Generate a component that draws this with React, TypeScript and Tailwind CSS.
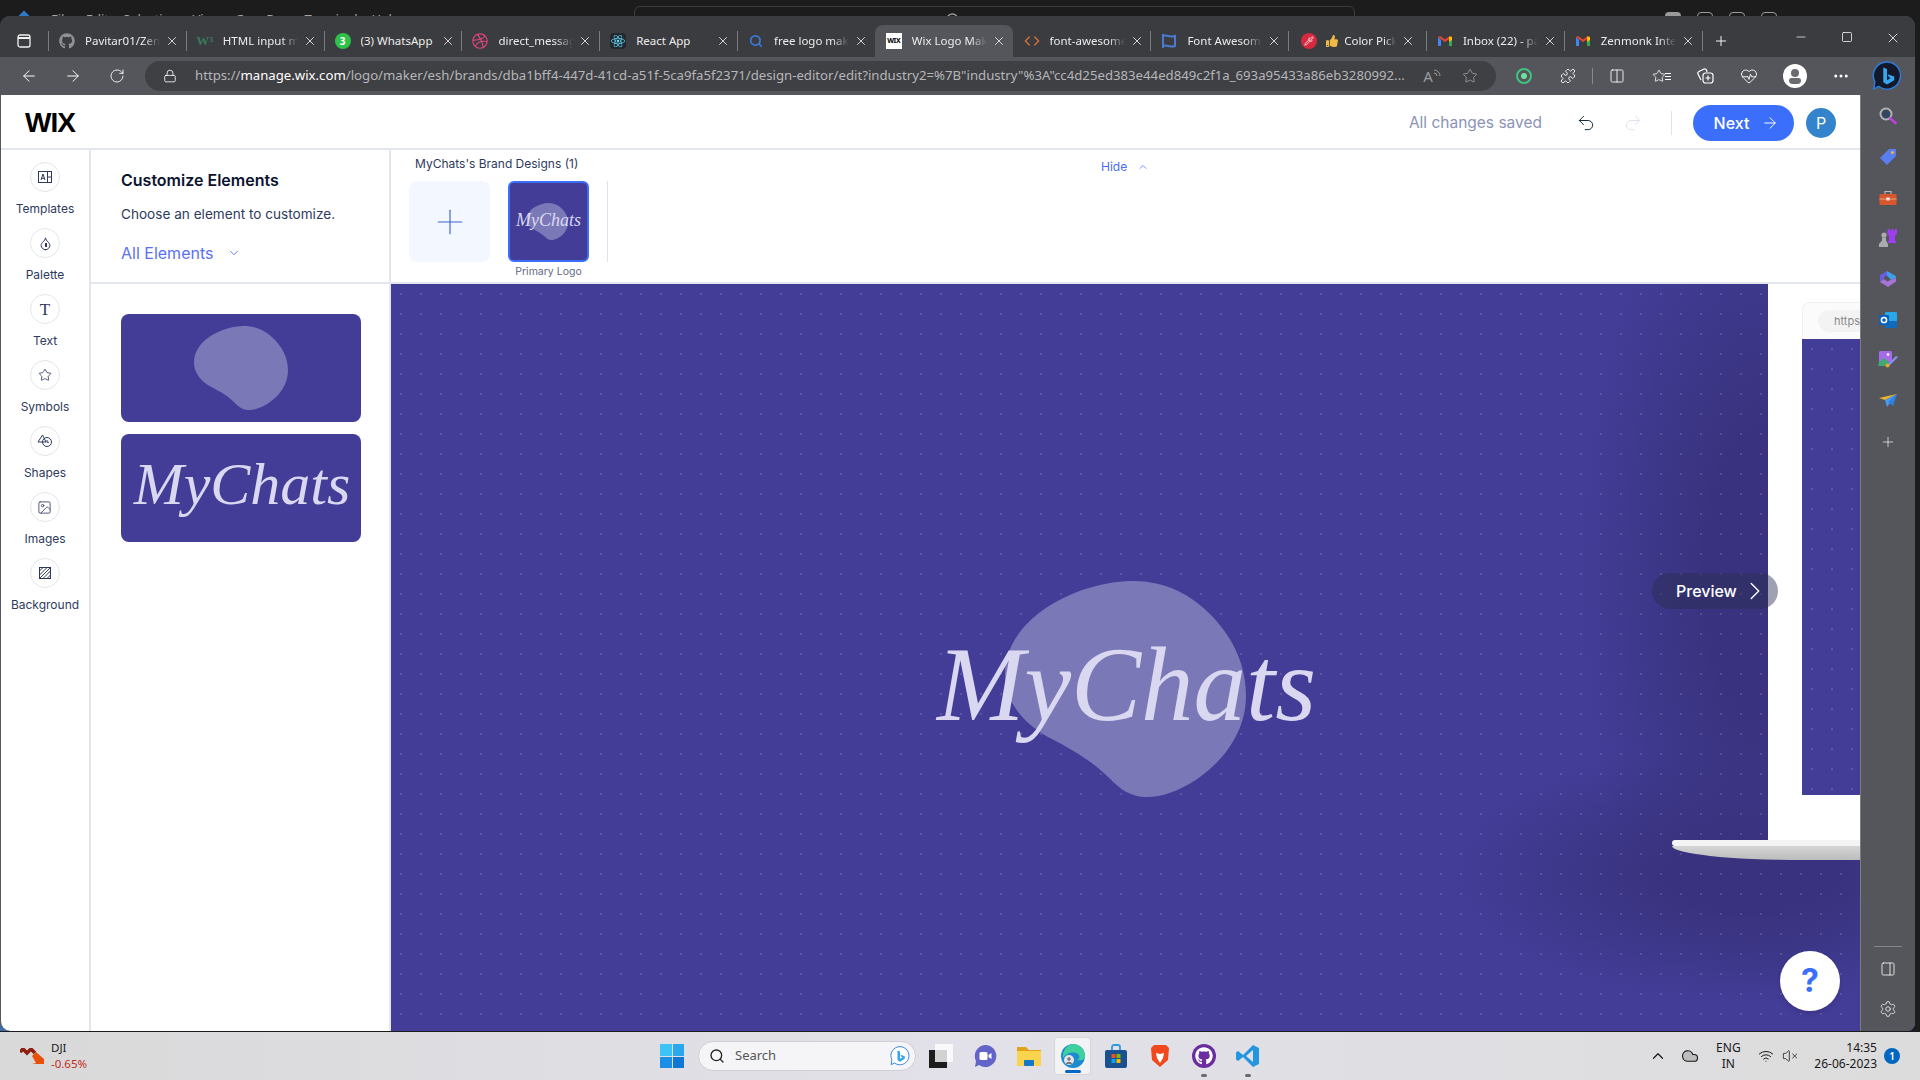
import React from "react";
import { FaDribbble, FaGithub, FaReact, FaThumbsUp } from "react-icons/fa";
import {
  ArrowLeft,
  ArrowRight,
  ChevronDown,
  ChevronRight,
  ChevronUp,
  Cloud,
  Code,
  Columns2,
  Droplet,
  Ellipsis,
  HeartPulse,
  Image,
  Lock,
  Minus,
  PanelRight,
  Pipette,
  Plus,
  Puzzle,
  Redo2,
  RotateCw,
  Search,
  Settings,
  Square,
  Star,
  Undo2,
  VolumeX,
  Wifi,
  X,
} from "lucide-react";

const serif = "font-['Liberation_Serif',serif] italic";

const Blob = ({ className }: { className: string }) => (
  <svg viewBox="0 0 723 650" className={className} preserveAspectRatio="none">
    <path
      d="M385 0C480 0 560 40 625 110C690 180 723 260 723 345C723 450 660 540 570 600C520 632 470 650 425 650C375 650 345 625 315 595C270 550 210 510 130 470C50 425 0 360 0 280C0 200 50 130 125 80C200 30 300 0 385 0Z"
      fill="#7b78b8"
    />
  </svg>
);

const Gmail = () => (
  <svg viewBox="0 0 16 16" className="w-4 h-4">
    <path d="M1 4v9h3V7z" fill="#4285f4" />
    <path d="M15 4v9h-3V7z" fill="#34a853" />
    <path d="M1 4l7 5 7-5-2-1-5 3.5L3 3z" fill="#ea4335" />
    <path d="M12 3.5L15 4v3l-3 2z" fill="#fbbc04" />
  </svg>
);

const tabs: { title: string; icon: React.ReactNode; fade?: boolean; active?: boolean; noDivider?: boolean }[] = [
  { title: "Pavitar01/Zenmonk", fade: true, icon: <FaGithub className="w-4 h-4 text-[#8f9094]" /> },
  { title: "HTML input maxlength", fade: true, icon: <span className="text-[13px] leading-4 font-bold text-[#3a7a5c] font-['Liberation_Serif',serif]">W³</span> },
  {
    title: "(3) WhatsApp",
    icon: (
      <span className="w-4 h-4 rounded-full bg-[#2fc24b] flex items-center justify-center text-[10px] font-bold text-white">
        3
      </span>
    ),
  },
  { title: "direct_message_inbox", fade: true, icon: <FaDribbble className="w-4 h-4 text-[#e0457f]" /> },
  {
    title: "React App",
    icon: (
      <span className="w-4 h-4 bg-[#23272f] rounded-sm flex items-center justify-center">
        <FaReact className="w-3.5 h-3.5 text-[#61dafb]" />
      </span>
    ),
  },
  { title: "free logo maker", fade: true, icon: <Search className="w-3.5 h-3.5 text-[#3b78d8]" strokeWidth={3} /> },
  {
    title: "Wix Logo Maker",
    fade: true,
    active: true,
    icon: (
      <span className="w-4 h-4 bg-white flex items-center justify-center text-[7px] font-bold text-black tracking-tighter">
        WIX
      </span>
    ),
  },
  { title: "font-awesome-icons", fade: true, noDivider: true, icon: <Code className="w-4 h-4 text-[#d8703f]" /> },
  {
    title: "Font Awesome Icons",
    fade: true,
    icon: (
      <svg viewBox="0 0 16 16" className="w-4 h-4" fill="none" stroke="#4a7bd0" strokeWidth="2">
        <path d="M2 1v14M2 3c4-2 7 2 12 0v10c-5 2-8-2-12 0" />
      </svg>
    ),
  },
  {
    title: "Color Picker",
    fade: true,
    icon: (
      <span className="flex items-center gap-[9px]">
        <span className="w-4 h-4 rounded-full bg-[#d6283e] flex items-center justify-center">
          <Pipette className="w-2.5 h-2.5 text-white" />
        </span>
        <FaThumbsUp className="w-3 h-3 text-[#f2b846]" />
      </span>
    ),
  },
  { title: "Inbox (22) - pavitar", fade: true, icon: <Gmail /> },
  { title: "Zenmonk Internship", fade: true, icon: <Gmail /> },
];

const Tab = ({ tab }: { tab: (typeof tabs)[number] }) => {
  const isPick = tab.title === "Color Picker";
  return (
    <div
      className={`w-[137.8px] h-8 flex items-center shrink-0 ${tab.active ? "bg-[#55565b] rounded-t-lg" : ""}`}
    >
      <span
        className={`w-px h-5 shrink-0 ${tab.active || tab.noDivider ? "bg-transparent" : "bg-[#7a7b7f]"}`}
      />
      <span className={`${isPick ? "w-[41px]" : "w-4"} h-4 ml-[10px] shrink-0 flex items-center justify-center`}>
        {tab.icon}
      </span>
      <span
        className={`${isPick ? "w-[52px] ml-[4px]" : "w-[75px] ml-[10px]"} shrink-0 overflow-hidden whitespace-nowrap text-[11.5px] text-[#ececec] ${
          tab.fade ? "[mask-image:linear-gradient(to_right,black_78%,transparent)]" : ""
        }`}
      >
        {tab.title.replace("Color Picker", "Color Pick")}
      </span>
      <X className="w-[14px] h-[14px] ml-[5px] text-[#e8e8e8] shrink-0" strokeWidth={1.5} />
    </div>
  );
};

const ToolSlot = ({ children, className = "" }: { children: React.ReactNode; className?: string }) => (
  <div className={`w-11 h-full flex items-center justify-center shrink-0 ${className}`}>{children}</div>
);

const BingBadge = ({ className }: { className: string }) => (
  <svg viewBox="0 0 32 32" className={className}>
    <path d="M16 1a14.5 14.5 0 1 1-9 26l-5 3 1-8A14.5 14.5 0 0 1 16 1z" fill="#13192a" stroke="#2b7de0" strokeWidth="1.5" />
    <path d="M12 7l4 1.5v12l4-2.3-2-1-1.3-3.2 7 2.4v4L16 25l-4-2.4z" fill="#37a6f0" />
  </svg>
);

const railItems: { label: string; icon: React.ReactNode }[] = [
  {
    label: "Templates",
    icon: (
      <svg viewBox="0 0 14 12" className="w-[14px] h-[12px]" fill="none" stroke="#2e3a5c" strokeWidth="1">
        <rect x="0.5" y="0.5" width="13" height="11" />
        <path d="M9.5 0.5v11M9.5 6h4M3 9l2-6 2 6M3.6 7.3h2.8" />
      </svg>
    ),
  },
  {
    label: "Palette",
    icon: (
      <span className="relative flex items-center justify-center">
        <Droplet className="w-[15px] h-[15px] text-[#2e3a5c]" strokeWidth={1.6} />
        <span className="absolute top-[7px] left-[7.500px] w-[2px] h-[4px] bg-[#2e3a5c]" />
      </span>
    ),
  },
  {
    label: "Text",
    icon: <span className="font-['Liberation_Serif',serif] text-[17px] leading-none text-[#2e3a5c]">T</span>,
  },
  { label: "Symbols", icon: <Star className="w-[14px] h-[14px] text-[#2e3a5c]" strokeWidth={1.4} /> },
  {
    label: "Shapes",
    icon: (
      <svg viewBox="0 0 16 14" className="w-4 h-[14px]" fill="none" stroke="#2e3a5c" strokeWidth="1">
        <path d="M5.5 1L1 8h8z" />
        <circle cx="10" cy="8" r="4.5" />
        <path d="M10 6v2.3h2" />
      </svg>
    ),
  },
  { label: "Images", icon: <Image className="w-[15px] h-[15px] text-[#2e3a5c]" strokeWidth={1.3} /> },
  {
    label: "Background",
    icon: (
      <svg viewBox="0 0 12 12" className="w-3 h-3" fill="none" stroke="#2e3a5c" strokeWidth="1">
        <rect x="0.5" y="0.5" width="11" height="11" />
        <path d="M0.5 4L4 .5M0.5 8L8 .5M0.5 11.5L11.5 .5M4 11.5L11.5 4M8 11.5L11.5 8" />
      </svg>
    ),
  },
];

const sideIcons: React.ReactNode[] = [
  <svg key="mag" viewBox="0 0 18 18" className="w-[18px] h-[18px]" fill="none">
    <circle cx="7" cy="7" r="5.5" fill="#35465f" stroke="#b0b3b8" strokeWidth="2" />
    <path d="M11.5 11.5L16.5 16" stroke="#c33fe0" strokeWidth="2.6" strokeLinecap="round" />
  </svg>,
  <svg key="tag" viewBox="0 0 18 18" className="w-[18px] h-[18px]">
    <path d="M10 1h7v7l-9 9-7-7z" fill="#5a7df0" />
    <circle cx="13.5" cy="4.5" r="1.6" fill="#e9b93a" />
  </svg>,
  <svg key="box" viewBox="0 0 18 18" className="w-[18px] h-[18px]">
    <path d="M6 5V2.5h6V5" fill="none" stroke="#bbb" strokeWidth="1.2" />
    <rect x="0.5" y="5" width="17" height="11" rx="1" fill="#d6572d" />
    <rect x="0.5" y="9.5" width="17" height="1" fill="#f6a27f" />
    <rect x="7.5" y="8.5" width="3" height="3" fill="#eee" />
  </svg>,
  <svg key="chess" viewBox="0 0 20 18" className="w-5 h-[18px]">
    <path d="M11 0h2v1.5h1.500V0h2v1.500H18V0h2v5l-2 1.500V12h1v2h-8v-2h1V6.500L10 5z" transform="translate(-1 0)" fill="#9d3ff0" />
    <circle cx="6" cy="6" r="2.600" fill="#a9abae" />
    <path d="M4 8.500h4v3l2 3.500v3H1v-3l3-3.500z" fill="#a9abae" />
  </svg>,
  <svg key="copilot" viewBox="0 0 18 18" className="w-[18px] h-[18px]">
    <path d="M8 1L2 4.500C1 5 1 6 1 7v5l4-3V7l3-1.500z" fill="#6a5de0" />
    <path d="M8 1l8 4.500c1 .5 1 1.500 1 2.500l-5 2-4-4.500z" fill="#3d9fe8" />
    <path d="M1 12l4-3 3 2.500 9-3.500v3.500L9 17z" fill="#a873d8" />
  </svg>,
  <svg key="outlook" viewBox="0 0 18 18" className="w-[18px] h-[18px]">
    <rect x="6" y="1" width="12" height="16" rx="1" fill="#28a8ea" />
    <rect x="6" y="10" width="12" height="7" fill="#0f6cbd" />
    <rect x="0" y="4" width="10" height="10" rx="1" fill="#0a5fc0" />
    <circle cx="5" cy="9" r="2.600" fill="none" stroke="#fff" strokeWidth="1.500" />
  </svg>,
  <svg key="img" viewBox="0 0 20 18" className="w-5 h-[18px]">
    <rect x="1" y="0" width="13" height="12" rx="1.500" fill="#a66be8" />
    <circle cx="10" cy="3.500" r="1.300" fill="#fff" />
    <path d="M1 11l5-4 6 5-3 3H0z" fill="#3fa873" />
    <path d="M9 14l9-9 2 1-9 9z" fill="#8b8ff0" />
    <circle cx="9.500" cy="14.500" r="2" fill="#e3a72c" />
  </svg>,
  <svg key="send" viewBox="0 0 18 14" className="w-[18px] h-[14px]">
    <path d="M0 4L18 0 6 6z" fill="#f0b429" />
    <path d="M18 0L6 6l2 7z" fill="#4a9cf0" />
    <path d="M18 0L9 8l5 4z" fill="#2f7fe0" />
  </svg>,
];

const TaskIcon = ({ children, dot }: { children: React.ReactNode; dot?: boolean }) => (
  <div className="w-11 h-full relative flex items-center justify-center shrink-0">
    {children}
    {dot && <span className="absolute bottom-[3px] w-[6px] h-[3px] rounded-full bg-[#6b6b6b]" />}
  </div>
);

export default function App() {
  return (
    <div className="w-[1920px] h-[1080px] overflow-hidden flex flex-col bg-[#1c1c1c] font-['Inter',sans-serif]">
      {/* whatever window sits behind the browser */}
      <div className="h-4 flex shrink-0 overflow-hidden text-[13px] text-[#a5a5a5] font-['Noto_Sans',sans-serif]">
        <span className="w-[51px] pl-[18px] pt-[13px] shrink-0">
          <span className="block w-3 h-3 bg-[#2f78c4] rotate-45" />
        </span>
        <div className="w-[583px] flex gap-[14px] pt-[9px] leading-5 shrink-0">
          <span>File</span>
          <span>Edit</span>
          <span>Selection</span>
          <span>View</span>
          <span>Go</span>
          <span>Run</span>
          <span>Terminal</span>
          <span>Help</span>
        </div>
        <div className="w-[721px] h-6 mt-[6px] rounded-t-md border border-[#3d3d3d] pl-[310px] pt-[5px] shrink-0">
          <Search className="w-4 h-4 text-[#9a9a9a]" />
        </div>
        <div className="flex gap-4 pl-[310px] pt-[12px]">
          <span className="w-4 h-4 rounded-sm bg-[#9a9a9a]" />
          <span className="w-4 h-4 rounded-sm border border-[#9a9a9a]" />
          <span className="w-4 h-4 rounded-sm border border-[#9a9a9a]" />
          <span className="w-4 h-4 rounded-sm border border-[#9a9a9a]" />
        </div>
      </div>

      {/* browser window */}
      <div className="w-[1915px] h-[1015px] shrink-0 flex flex-col rounded-t-[10px] rounded-br-[8px] overflow-hidden bg-[#55565b] font-['Noto_Sans',sans-serif]">
        <div className="h-[41px] shrink-0 bg-[#3b3c40] flex items-end">
          <div className="w-12 h-8 flex items-center justify-center shrink-0">
            <svg viewBox="0 0 14 14" className="w-[14px] h-[14px]" fill="none" stroke="#f0f0f0" strokeWidth="1.300">
              <rect x="1" y="1" width="12" height="12" rx="2" />
              <path d="M1 4h12" strokeWidth="2" />
            </svg>
          </div>
          {tabs.map((tab) => (
            <Tab key={tab.title} tab={tab} />
          ))}
          <span className="w-px h-5 bg-[#7a7b7f] mb-[6px] shrink-0" />
          <div className="h-8 w-9 flex items-center justify-center shrink-0">
            <Plus className="w-4 h-4 text-[#f0f0f0]" strokeWidth={1.5} />
          </div>
          <div className="flex self-start pt-[14px] ml-[39px]">
            <div className="w-[46px] flex justify-center">
              <Minus className="w-[14px] h-[14px] text-white" strokeWidth={1.2} />
            </div>
            <div className="w-[46px] flex justify-center">
              <Square className="w-[12px] h-[12px] mt-px text-white" strokeWidth={1.5} />
            </div>
            <div className="w-[46px] flex justify-center">
              <X className="w-[16px] h-[16px] text-white" strokeWidth={1.2} />
            </div>
          </div>
        </div>

        <div className="h-[38px] shrink-0 flex items-center pl-[7px]">
          <ToolSlot>
            <ArrowLeft className="w-[18px] h-[18px] text-white" strokeWidth={1.3} />
          </ToolSlot>
          <ToolSlot>
            <ArrowRight className="w-[18px] h-[18px] text-white" strokeWidth={1.3} />
          </ToolSlot>
          <ToolSlot>
            <RotateCw className="w-4 h-4 text-white" strokeWidth={1.3} />
          </ToolSlot>
          <div className="w-[1351px] h-[30px] ml-[6px] rounded-full bg-[#3f4044] flex items-center shrink-0">
            <div className="w-[50px] flex justify-center shrink-0">
              <Lock className="w-[14px] h-[14px] text-white" strokeWidth={1.4} />
            </div>
            <div className="w-[1214px] shrink-0 overflow-hidden whitespace-nowrap text-[13.2px] text-[#b5b6b9]">
              https://<span className="text-white">manage.wix.com</span>
              /logo/maker/esh/brands/dba1bff4-447d-41cd-a51f-5ca9fa5f2371/design-editor/edit?industry2=%7B"industry"%3A"cc4d25ed383e44ed849c2f1a_693a95433a86eb3280992...
            </div>
            <span className="w-[46px] flex justify-center items-start text-[15px] leading-none text-[#9a9b9e] shrink-0">
              A
              <svg viewBox="0 0 8 8" className="w-2 h-2" fill="none" stroke="#9a9b9e" strokeWidth="1">
                <path d="M1 4a3 3 0 0 1 3 3M1 1a6 6 0 0 1 6 6" />
              </svg>
            </span>
            <Star className="w-4 h-4 ml-[7px] text-[#9a9b9e]" strokeWidth={1.3} />
          </div>
          <ToolSlot className="ml-[6px]">
            <span className="w-4 h-4 rounded-full border-2 border-[#3fc380] flex items-center justify-center">
              <span className="w-[6px] h-[6px] rounded-full bg-[#6fe0a0]" />
            </span>
          </ToolSlot>
          <ToolSlot>
            <Puzzle className="w-4 h-4 text-white" strokeWidth={1.3} />
          </ToolSlot>
          <span className="w-px h-4 mx-[2px] bg-[#88898c] shrink-0" />
          <ToolSlot>
            <Columns2 className="w-4 h-4 text-white" strokeWidth={1.3} />
          </ToolSlot>
          <ToolSlot>
            <span className="flex items-center">
              <Star className="w-[14px] h-[14px] text-white" strokeWidth={1.4} />
              <span className="flex flex-col gap-[2px] -ml-px">
                <span className="w-[6px] h-px bg-white" />
                <span className="w-[6px] h-px bg-white" />
                <span className="w-[6px] h-px bg-white" />
              </span>
            </span>
          </ToolSlot>
          <ToolSlot>
            <svg viewBox="0 0 18 18" className="w-[18px] h-[18px]" fill="none" stroke="#fff" strokeWidth="1.200">
              <path d="M5 13L2 7c-.5-1 0-2 1-2.500L8 2c1-.5 2 0 2.500 1L11 5" />
              <rect x="7" y="6" width="10" height="10" rx="2.500" />
              <path d="M12 8.500v5M9.500 11h5" />
            </svg>
          </ToolSlot>
          <ToolSlot>
            <HeartPulse className="w-[18px] h-[18px] text-white" strokeWidth={1.2} />
          </ToolSlot>
          <ToolSlot className="ml-[2px]">
            <span className="w-6 h-6 rounded-full bg-white flex flex-col items-center justify-center">
              <span className="w-2 h-2 rounded-full bg-[#6b6c70]" />
              <span className="w-3 h-[6px] mt-px rounded-t-[3px] rounded-b-sm bg-[#6b6c70]" />
            </span>
          </ToolSlot>
          <ToolSlot className="ml-[2px]">
            <Ellipsis className="w-[18px] h-[18px] text-white" strokeWidth={2} />
          </ToolSlot>
          <ToolSlot className="ml-[2px]">
            <BingBadge className="w-[30px] h-[30px]" />
          </ToolSlot>
        </div>

        <div className="flex-1 flex min-h-0 bg-[#3d6ca8]">
          {/* page */}
          <div className="w-[1860px] shrink-0 flex flex-col bg-white border-l border-[#55565b] rounded-bl-[10px] overflow-hidden font-['Inter',sans-serif]">
            <header className="h-[55px] shrink-0 border-b-2 border-[#e3e6ec] flex items-center pl-6 pt-[2px]">
              <span className="text-[28px] font-bold leading-none tracking-[-1px] text-black font-['Liberation_Sans',sans-serif]">
                WIX
              </span>
              <span className="ml-auto text-[15.5px] text-[#8b93b5]">All changes saved</span>
              <Undo2 className="w-5 h-5 ml-[34px] text-[#162d3d]" strokeWidth={1.2} />
              <Redo2 className="w-5 h-5 ml-[27px] text-[#dfe3ee]" strokeWidth={1.2} />
              <span className="w-px h-6 ml-[28px] bg-[#dfe3ee]" />
              <button className="w-[101px] h-9 ml-[21px] pl-[6px] rounded-full bg-[#3b6ffb] text-white text-base font-medium flex items-center justify-center gap-[12px]">
                Next
                <ArrowRight className="w-[18px] h-[18px]" strokeWidth={1.3} />
              </button>
              <span className="w-[30px] h-[30px] ml-3 mr-6 rounded-full bg-[#3384cc] text-white text-base flex items-center justify-center">
                P
              </span>
            </header>

            <div className="flex-1 flex min-h-0">
              <nav className="w-[90px] shrink-0 border-r-2 border-[#e3e6ec] flex flex-col items-center pt-[12px]">
                {railItems.map((item) => (
                  <div key={item.label} className="h-[66px] flex flex-col items-center shrink-0">
                    <span className="w-[30px] h-[30px] rounded-full border border-[#e3e6ec] flex items-center justify-center">
                      {item.icon}
                    </span>
                    <span className="mt-[9px] text-xs leading-4 text-[#2e3a5c]">{item.label}</span>
                  </div>
                ))}
              </nav>

              <aside className="w-[300px] shrink-0 border-r-2 border-[#e3e6ec] flex flex-col">
                <div className="h-[134px] shrink-0 border-b-2 border-[#e3e6ec] pl-[30px] pt-5">
                  <h2 className="text-base leading-5 font-semibold text-[#0c1330]">Customize Elements</h2>
                  <p className="mt-[14px] text-[13.6px] leading-5 text-[#2e3a5c]">Choose an element to customize.</p>
                  <div className="mt-[19px] flex items-center text-base leading-5 text-[#5a71f5]">
                    All Elements
                    <ChevronDown className="w-[14px] h-[14px] ml-[14px]" strokeWidth={1.5} />
                  </div>
                </div>
                <div className="pl-[30px] pt-[30px] flex flex-col gap-3">
                  <div className="w-60 h-[108px] rounded-lg bg-[#433d98] flex items-center justify-center">
                    <Blob className="w-[94px] h-[84px]" />
                  </div>
                  <div className="w-60 h-[108px] rounded-lg bg-[#433d98] flex items-center justify-center pl-[2px] pb-[8px]">
                    <span className={`${serif} text-[60px] leading-none text-[#d9d8f0]`}>MyChats</span>
                  </div>
                </div>
              </aside>

              <main className="flex-1 flex flex-col min-w-0">
                <div className="h-[134px] shrink-0 border-b-2 border-[#e3e6ec] relative">
                  <div className="flex items-start pl-6 pt-1">
                    <span className="w-[686px] text-xs leading-5 text-[#2e3a5c]">MyChats's Brand Designs (1)</span>
                    <span className="flex items-center gap-[10px] mt-[3px] text-xs leading-5 text-[#4a6ef5]">
                      Hide
                      <ChevronUp className="w-3 h-3" strokeWidth={1.5} />
                    </span>
                  </div>
                  <div className="flex items-start pl-[18px] mt-[4px]">
                    <div className="w-[81px] h-[81px] rounded-lg bg-[#f3f7ff] flex items-center justify-center">
                      <Plus className="w-10 h-10 text-[#3d63d8]" strokeWidth={0.7} />
                    </div>
                    <div className="ml-[18px] flex flex-col items-center">
                      <div className="w-[81px] h-[81px] rounded-md border-2 border-[#3b6ffb] bg-[#433d98] relative flex items-center justify-center pb-[4px]">
                        <Blob className="absolute left-[17px] top-[20px] w-[41px] h-[37px]" />
                        <span className={`${serif} relative text-[18px] leading-none text-[#d9d8f0]`}>MyChats</span>
                      </div>
                      <span className="mt-[2px] text-[10.5px] leading-4 text-[#5f6a85]">Primary Logo</span>
                    </div>
                    <span className="w-px h-[81px] ml-[18px] bg-[#dfe3ee]" />
                  </div>
                </div>

                {/* canvas */}
                <div className="flex-1 relative overflow-hidden bg-[#433d98]">
                  <div className="absolute inset-0 bg-[radial-gradient(ellipse_190px_430px_at_1377px_290px,#39337f_35%,transparent)]" />
                  <div className="absolute inset-0 bg-[radial-gradient(ellipse_300px_130px_at_1360px_590px,#39337f_30%,transparent)]" />
                  <div className="absolute inset-0 bg-[radial-gradient(rgba(255,255,255,0.22)_0.5px,transparent_1px)] bg-[size:20px_20px]" />

                  <Blob className="absolute left-[614px] top-[297px] w-[241px] h-[216px]" />
                  <span className={`${serif} absolute left-[546px] top-[341px] text-[105px] leading-[120px] text-[#d9d8f0] whitespace-nowrap`}>
                    MyChats
                  </span>

                  {/* laptop mock on the right */}
                  <div className="absolute left-[1377px] top-0 w-[92px] h-[556px] bg-white pl-[34px] pt-[18px]">
                    <div className="h-[37px] rounded-tl-lg bg-[#fbfbfb] border-l border-t border-[#f0f0f0] pl-[15px] pt-[7px] overflow-hidden">
                      <span className="block w-[60px] h-[22px] rounded-l-full bg-[#f3f3f3] pl-[16px] text-[11px] leading-[22px] text-[#8a8a8a]">
                        https:
                      </span>
                    </div>
                    <div className="h-[456px] bg-[#433d98] bg-[radial-gradient(rgba(255,255,255,0.22)_0.5px,transparent_1px)] bg-[size:20px_20px]" />
                  </div>
                  <div className="absolute left-[1281px] top-[556px] w-[188px]">
                    <div className="h-[6px] rounded-l-sm bg-[#f4f4f4]" />
                    <div className="h-[14px] rounded-bl-[130px_14px] bg-gradient-to-b from-[#d6d6d6] to-[#bcbcbc]" />
                  </div>

                  <div className="absolute left-[1261px] top-[289px] w-[126px] h-9 rounded-full bg-[#2a2c4f]/45 flex items-center pl-6 text-base font-medium text-white">
                    Preview
                    <ChevronRight className="w-[30px] h-[30px] ml-[3px]" strokeWidth={1.1} />
                  </div>

                  <button className="absolute left-[1389px] top-[667px] w-[60px] h-[60px] rounded-full bg-white shadow-md flex items-center justify-center text-[32px] font-bold text-[#3b6ffb]">
                    ?
                  </button>
                </div>
              </main>
            </div>
          </div>

          {/* edge sidebar */}
          <div className="flex-1 bg-[#55565b] border-l border-[#7c7d80] flex flex-col items-center pr-[1px] pt-px">
            {sideIcons.map((icon, i) => (
              <div key={i} className="h-[40.700px] flex items-center justify-center shrink-0">
                {icon}
              </div>
            ))}
            <div className="h-[40.700px] flex items-center justify-center shrink-0">
              <Plus className="w-[16px] h-[16px] text-white" strokeWidth={1} />
            </div>
            <span className="mt-auto w-7 h-px bg-[#85868a]" />
            <div className="h-10 mt-[2px] flex items-center justify-center">
              <PanelRight className="w-[16px] h-[16px] text-white" strokeWidth={1.2} />
            </div>
            <div className="h-10 mb-[2px] flex items-center justify-center">
              <Settings className="w-[18px] h-[18px] text-white" strokeWidth={1} />
            </div>
          </div>
        </div>
      </div>

      {/* windows taskbar */}
      <div className="flex-1 mt-px flex items-center bg-gradient-to-r from-[#d9d9d9] via-[#e2e1e9] to-[#dcdcdc] font-['Noto_Sans',sans-serif]">
        <div className="w-[660px] h-full flex items-center pl-5 shrink-0">
          <svg viewBox="0 0 24 16" className="w-6 h-4">
            <path d="M0 4l3-3 4 4 4-4 4 4" fill="none" stroke="#8f1d10" strokeWidth="3.500" />
            <path d="M12 8l4-4 8 7v-7 12H12l4-1z" fill="#e8500a" />
          </svg>
          <div className="ml-[7px] flex flex-col text-[11.5px] leading-4">
            <span className="text-[#1a1a1a]">DJI</span>
            <span className="text-[#c42b1c]">-0.65%</span>
          </div>
        </div>
        <div className="h-full w-6 flex items-center shrink-0">
          <div className="w-6 h-6 grid grid-cols-2 gap-px">
            <span className="bg-[#3cc4f7]" />
            <span className="bg-[#2ba7ee]" />
            <span className="bg-[#1b8fe6]" />
            <span className="bg-[#0f78d4]" />
          </div>
        </div>
        <div className="w-[218px] h-[30px] ml-[14px] rounded-full bg-[#f5f5f8] border border-[#d0d0d4] flex items-center pl-[10px] shrink-0">
          <Search className="w-4 h-4 text-[#222]" strokeWidth={2} />
          <span className="ml-[10px] text-[13px] text-[#555]">Search</span>
          <BingBadge className="w-[20px] h-[20px] ml-auto mr-[5px] [&>path:first-child]:fill-white" />
        </div>
        <div className="h-full flex ml-[3px]">
          <TaskIcon>
            <span className="w-6 h-6 relative">
              <span className="absolute left-0 bottom-0 w-[18px] h-[18px] bg-[#1d1d1d]" />
              <span className="absolute right-0 top-0 w-[18px] h-[18px] bg-white/80" />
            </span>
          </TaskIcon>
          <TaskIcon>
            <svg viewBox="0 0 24 24" className="w-6 h-6">
              <path d="M12 1a11 11 0 1 1-6 20l-4 2 1-6A11 11 0 0 1 12 1z" fill="#6264c8" />
              <rect x="6.500" y="8" width="8" height="8" rx="1.500" fill="#fff" />
              <path d="M15.500 11l3-2v6l-3-2z" fill="#fff" />
            </svg>
          </TaskIcon>
          <TaskIcon>
            <svg viewBox="0 0 24 24" className="w-6 h-6">
              <path d="M0 3h9l3 3h12v16H0z" fill="#e4a21c" />
              <path d="M0 7h24v15H0z" fill="#fbd44f" />
              <rect x="7" y="16" width="10" height="6" rx="1" fill="#1478c8" />
            </svg>
          </TaskIcon>
          <div className="w-[37px] h-[38px] self-center mx-[3px] rounded bg-white/60 border border-[#d6d6d8] relative flex items-center justify-center shrink-0">
            <svg viewBox="0 0 24 24" className="w-6 h-6">
              <circle cx="12" cy="12" r="12" fill="#1e8ad0" />
              <path d="M12 0a12 12 0 0 1 12 12c0 4-4 5-8 4 3-1 3-4 1-6-4-3-12-1-15 4A12 12 0 0 1 12 0z" fill="#3fd0a0" />
              <circle cx="8" cy="16" r="5" fill="#e6e6e8" />
              <circle cx="8" cy="15" r="1.800" fill="#777" />
              <path d="M5 20c0-3 6-3 6 0z" fill="#777" />
            </svg>
            <span className="absolute bottom-px w-4 h-[3px] rounded-full bg-[#0067c0]" />
          </div>
          <TaskIcon>
            <svg viewBox="0 0 24 24" className="w-6 h-6">
              <path d="M8 6V3a2 2 0 0 1 2-2h4a2 2 0 0 1 2 2v3" fill="none" stroke="#2f9ae0" strokeWidth="1.800" />
              <rect x="1" y="6" width="22" height="18" rx="2" fill="#19508f" />
              <rect x="7.500" y="10" width="4" height="4" fill="#f25022" />
              <rect x="12.500" y="10" width="4" height="4" fill="#7fba00" />
              <rect x="7.500" y="15" width="4" height="4" fill="#00a4ef" />
              <rect x="12.500" y="15" width="4" height="4" fill="#ffb900" />
            </svg>
          </TaskIcon>
          <TaskIcon>
            <svg viewBox="0 0 24 24" className="w-6 h-6">
              <path d="M6 1h12l3 3-1 12-8 7-8-7-1-12z" fill="#f1491d" />
              <path d="M8 9l4 1 4-1-1 5-3 5-3-5z" fill="#fff" />
            </svg>
          </TaskIcon>
          <TaskIcon dot>
            <span className="w-6 h-6 rounded-full bg-[#6a2c9f] flex items-center justify-center">
              <FaGithub className="w-[18px] h-[18px] text-white" />
            </span>
          </TaskIcon>
          <TaskIcon dot>
            <svg viewBox="0 0 24 24" className="w-6 h-6">
              <path d="M17 1l6 3v16l-6 3L7 13l-5 4-2-1.500V8.500L2 7l5 4z" fill="#2496e0" />
              <path d="M17 6l-7 6 7 6z" fill="#e2e1e9" />
            </svg>
          </TaskIcon>
        </div>
        <div className="ml-auto h-full flex items-center text-[#1a1a1a] pr-5">
          <ChevronUp className="w-[18px] h-[18px]" strokeWidth={1.6} />
          <Cloud className="w-[18px] h-[18px] ml-[14px]" strokeWidth={1.5} fill="#bdbdbd" />
          <div className="w-[40px] ml-[9px] flex flex-col items-center text-xs leading-4">
            <span>ENG</span>
            <span>IN</span>
          </div>
          <Wifi className="w-4 h-4 ml-[10px]" strokeWidth={1.5} />
          <VolumeX className="w-4 h-4 ml-2" strokeWidth={1.2} />
          <div className="ml-[16px] flex flex-col items-end text-xs leading-4">
            <span>14:35</span>
            <span>26-06-2023</span>
          </div>
          <span className="w-4 h-4 ml-[7px] rounded-full bg-[#0067c0] text-white text-[10px] font-semibold flex items-center justify-center">
            1
          </span>
        </div>
      </div>
    </div>
  );
}
